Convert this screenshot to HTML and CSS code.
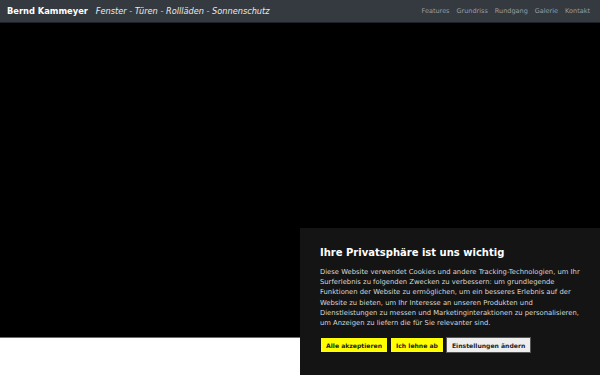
FILE: index.html
```html
<!DOCTYPE html>
<html lang="de">
<head>
    <meta charset="UTF-8">
    <meta name="viewport" content="width=device-width, initial-scale=1.0">
    <title>Bernd Kammeyer</title>
    <link rel="stylesheet" href="styles.css">
</head>
<body>
    <nav class="navbar">
        <div class="brand">
            <span class="brand-name">Bernd Kammeyer</span>
            <span class="brand-slogan">Fenster - Türen - Rollläden - Sonnenschutz</span>
        </div>
        <ul class="nav-links">
            <li><a href="#features">Features</a></li>
            <li><a href="#grundriss">Grundriss</a></li>
            <li><a href="#rundgang">Rundgang</a></li>
            <li><a href="#galerie">Galerie</a></li>
            <li><a href="#kontakt">Kontakt</a></li>
        </ul>
    </nav>

    <div class="hero"></div>
    <div class="content"></div>

    <div class="cookie-box">
        <h2>Ihre Privatsphäre ist uns wichtig</h2>
        <p>Diese Website verwendet Cookies und andere Tracking-Technologien, um Ihr Surferlebnis zu folgenden Zwecken zu verbessern: um grundlegende Funktionen der Website zu ermöglichen, um ein besseres Erlebnis auf der Website zu bieten, um Ihr Interesse an unseren Produkten und Dienstleistungen zu messen und Marketinginteraktionen zu personalisieren, um Anzeigen zu liefern die für Sie relevanter sind.</p>
        <div class="cookie-buttons">
            <button class="btn-yellow">Alle akzeptieren</button>
            <button class="btn-yellow">Ich lehne ab</button>
            <button class="btn-light">Einstellungen ändern</button>
        </div>
    </div>
</body>
</html>
```
FILE: styles.css
```css
body {
    margin: 0;
    padding: 0;
    font-family: "DejaVu Sans", sans-serif;
    background: #fff;
    overflow: hidden;
}
.navbar {
    display: flex;
    align-items: center;
    justify-content: space-between;
    height: 23px;
    padding: 0 10px 0 7px;
    background-color: #343a40;
    border-bottom: 1px solid #1d2024;
    box-sizing: border-box;
}
.brand {
    display: flex;
    align-items: baseline;
}
.brand-name {
    color: #fff;
    font-weight: bold;
    font-size: 8.3px;
}
.brand-slogan {
    color: #e9eaeb;
    font-style: italic;
    font-size: 8.2px;
    margin-left: 8px;
}
.nav-links {
    display: flex;
    list-style: none;
    margin: 0;
    padding: 0;
    gap: 7px;
    font-size: 6.5px;
    line-height: 1;
}
.nav-links a {
    color: #9a9da0;
    text-decoration: none;
}
.hero {
    height: 314px;
    background: #000;
    border-bottom: 1px solid #6c6c6c;
}
.content {
    height: 40px;
    background: #fff;
}
.cookie-box {
    position: fixed;
    left: 300px;
    top: 228px;
    right: 0;
    bottom: 0;
    background: #141414;
    padding: 19px 20px 0 20px;
    box-sizing: border-box;
}
.cookie-box h2 {
    margin: 0 0 9px 0;
    color: #fff;
    font-size: 10px;
    font-weight: bold;
}
.cookie-box p {
    margin: 0;
    color: #d7d7d7;
    font-size: 6.8px;
    line-height: 10.2px;
}
.cookie-buttons {
    display: flex;
    gap: 2px;
    margin-top: 9px;
}
button {
    font-family: "DejaVu Sans", sans-serif;
    font-size: 6.1px;
    font-weight: bold;
    color: #222;
    height: 16px;
    margin: 0;
    padding: 0 5px;
    border: 1px solid #111;
    cursor: pointer;
}
.btn-yellow {
    background-color: #ffff00;
}
.btn-light {
    background-color: #eeeeee;
    border-color: #555;
}
```
